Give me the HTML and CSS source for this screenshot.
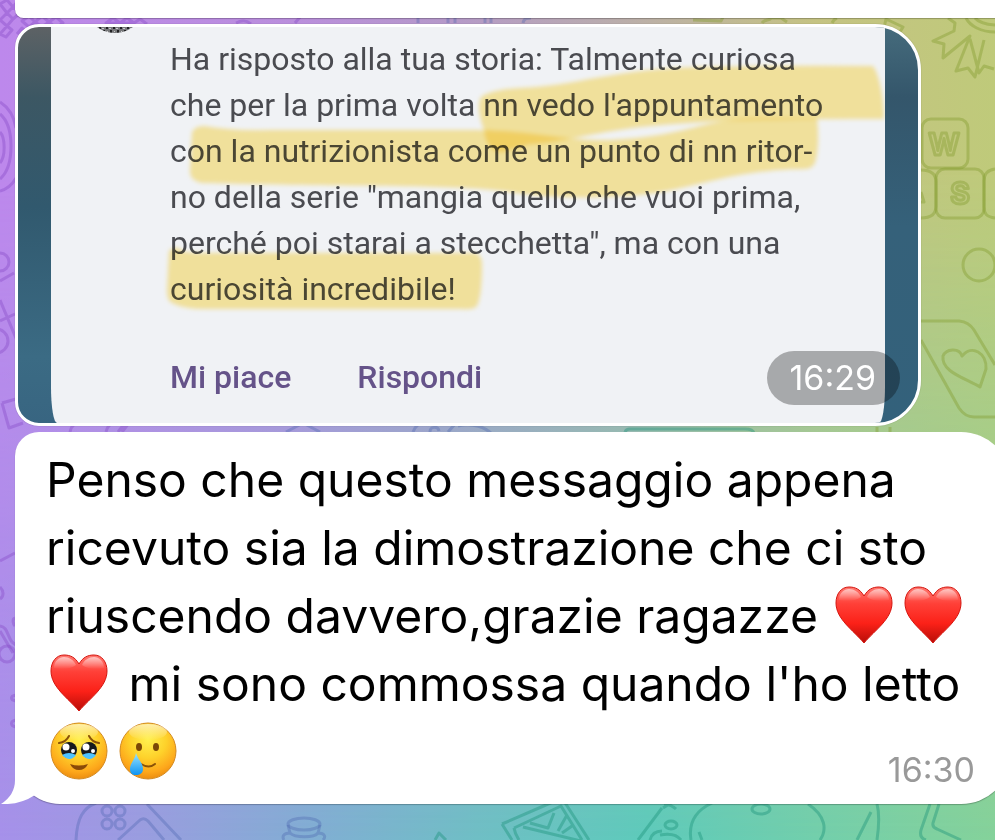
FILE: index.html
```html
<!DOCTYPE html>
<html lang="it">
<head>
    <meta charset="UTF-8">
    <meta name="viewport" content="width=device-width, initial-scale=1.0">
    <title>Chat</title>
    <link rel="stylesheet" href="styles.css">
</head>
<body>
    <div class="wallpaper"></div>
    <svg class="doodles" viewBox="0 0 995 840" preserveAspectRatio="xMidYMid slice" aria-hidden="true">
        <g class="purple">
            <path d="M0 4l7-4 6 7-6 6zM7 13l6-6 7 6-7 6zM0 20l7-7 6 6-6 7zM13 7l5-6 6 5-4 7zM0 34l7-8 5 4-6 7z"/>
            <path d="M22 21l7-5 6 6-6 5zM35 22l7-6 7 6-7 5zM49 22l7-5 7 6-7 5zM106 23l7-5 7 5zM120 23l7-5 7 5zM134 23l6-4 7 5M28 34l-6-6-5 6"/>
            <path d="M0 102c8 5 14 14 16 26M0 114c7 6 11 16 11 32s-4 27-11 33M0 132c5 5 6 24 0 31M0 191c8-2 12-6 16-13"/>
            <circle cx="0" cy="262" r="9"/>
            <path d="M0 281l14-8M0 300l18 43M0 321l15-7"/>
            <circle cx="-4" cy="341" r="12"/>
            <path d="M2 403l14-4M2 403l7 25 14-5M70 432c1-6 4-9 10-9M106 432c2-7 4-8 8-8M118 432l7-9M122 432l7-9"/>
            <path d="M0 561l15-8M0 587c4 4 4 9 0 12M0 626c8 1 7 10 12 16M15 618c-3 1-2 6 0 8M0 631l13 22M12 642l4 3"/>
            <circle cx="7" cy="654" r="8"/>
            <path d="M16 695c-6 1-6 5 0 6M16 720c-6 1-6 6 0 7M236 23c6-3 10-3 15 1M295 23l5-6"/>
        </g>
        <g class="blue">
            <path d="M76 840c1-22 7-32 20-37M147 804l34 36M118 840l22-20q4-3 8 1l16 19"/>
            <circle cx="107" cy="811" r="5"/><circle cx="120" cy="811" r="5"/>
            <circle cx="107" cy="824" r="5"/><circle cx="120" cy="824" r="5"/>
            <ellipse cx="304" cy="824" rx="16" ry="6"/>
            <path d="M288 825l2 8c5 5 24 5 28 0l2-8M290 833c-7 0-8 4-6 7M318 833c7 0 8 4 5 7"/>
            <path d="M286 432l17-9 17 9M413 432c3-8 9-10 15-9M430 432c0-6 8-6 9-1M448 432l8-9M458 426c15-4 28 2 34 8"/>
            <path d="M418 23v-5M448 23v-5M455 23v-5M485 23v-5M491 23v-5M523 23c1-5 4-5 8-5"/>
        </g>
        <g class="teal">
            <path d="M502 824l60-26 27 42M502 824l10 16M514 828l47-22 21 34M514 828q1 6 5 12M523 827l62 15M530 823l18 5 6-15M558 831l9-16M562 833l10-7"/>
            <path d="M435 840l4-7 7 7M638 840l24-32M650 840c2-8 8-9 12-9M664 804q8 1 12 5M663 808l11-7"/>
            <ellipse cx="671" cy="825" rx="6" ry="4"/>
            <path d="M660 835q15-3 21 5M691 840c-3-18 6-30 21-37M808 804c18 12 19 26 12 36M699 832l3 8"/>
            <ellipse cx="761" cy="809" rx="9" ry="5"/>
            <path d="M877 804c3 11 2 22 0 36M871 812l-14 28M930 804l-9 26q-2 8 5 10M939 804l-6 19q-1 4 4 6l24 11"/>
            <path d="M625 432q1-3 5-3h115q8 0 9 4"/>
        </g>
        <g class="green">
            <path d="M693 20l28 1 3-6M762 23c2-4 8-2 9-5l10 0 6 4M832 23q2-4 5-5M886 19l17 8-8 13-12-8z"/>
            <path d="M948 18l7 5-1 8-21 10 11 3-1 14 27-22-14 35 12-3 7 9 9-37M970 39l9 34 5-7 10 3M966 18c4 8 15 14 29 14M975 18q5 6 20 7"/>
            <rect x="922" y="119" width="46" height="49" rx="9"/>
            <rect x="936" y="169" width="48" height="49" rx="9"/>
            <path d="M921 170c10 0 15 4 15 12v24c0 8-5 12-15 12M995 169c-8 1-11 5-11 12v26c0 7 3 10 11 11M921 192l3 10h-3"/>
            <circle cx="979" cy="265" r="16"/>
            <path d="M921 321h38q10 1 15 9l21 35M921 340l38 68q6 9 15 9h21M877 427v5M890 427v5"/>
            <path d="M962 356c-3-9-16-7-19 0-2 16 22 22 37 31l6-18c1-16-14-25-24-13z"/>
            <text x="944" y="155" text-anchor="middle">W</text>
            <text x="960" y="204" text-anchor="middle">S</text>
        </g>
    </svg>

    <main class="chat">
        <div class="bubble previous"></div>

        <article class="photo">
            <div class="sheet">
                <svg class="avatar" viewBox="0 0 60 60" aria-hidden="true">
                    <defs>
                        <pattern id="speckle" width="7" height="6" patternUnits="userSpaceOnUse">
                            <rect width="7" height="6" fill="#77787a"/>
                            <path d="M0 0h2v2H0zM4 3h2v3H4z" fill="#222325"/>
                            <path d="M3 1h2v1H3zM1 4h1v1H1z" fill="#c9cacb"/>
                        </pattern>
                    </defs>
                    <circle cx="30" cy="30" r="30" fill="url(#speckle)"/>
                </svg>
                <p class="story">
                    Ha risposto alla tua storia: Talmente curiosa<br>
                    che per la prima volta nn vedo l'appuntamento<br>
                    con la nutrizionista come un punto di nn ritor-<br>
                    no della serie "mangia quello che vuoi prima,<br>
                    perché poi starai a stecchetta", ma con una<br>
                    curiosità incredibile!
                </p>
                <div class="actions">
                    <button type="button">Mi piace</button>
                    <button type="button">Rispondi</button>
                </div>
                <svg class="marker" viewBox="51 27 834 396" aria-hidden="true">
                    <path d="M481 97Q490 90 520 88C570 87 620 68 700 67Q790 65 873 66C879 74 884 98 884 119Q720 118 640 127C590 133 560 143 530 144L502 152Q487 152 484 130Q476 108 481 97Z"/>
                    <path d="M192 132Q195 126 204 126Q230 131 270 130H470C530 130 560 141 610 140C690 136 700 119 760 118H817Q820 145 815 163Q812 169 804 169C730 170 700 188 640 195Q560 201 510 192C460 184 340 187 210 183Q191 184 190 172Z"/>
                    <path d="M169 251Q176 244 184 252L200 253H476Q482 256 482 264Q482 295 477 306Q473 310 462 309H205Q184 309 172 303Q167 301 167 290Z"/>
                </svg>
            </div>
            <time class="stamp">16:29</time>
        </article>

        <article class="bubble message">
            <p>
                Penso che questo messaggio appena<br>
                ricevuto sia la dimostrazione che ci sto<br>
                riuscendo davvero,grazie ragazze
                <svg class="emoji" viewBox="0 0 58 58" role="img" aria-label="cuore rosso"><use href="#heart"/></svg><svg class="emoji" viewBox="0 0 58 58" role="img" aria-label="cuore rosso"><use href="#heart"/></svg><br>
                <svg class="emoji" viewBox="0 0 58 58" role="img" aria-label="cuore rosso">
                    <defs>
                        <linearGradient id="red" x1="0" y1="0" x2="0" y2="1">
                            <stop offset="0" stop-color="#ff7a72"/>
                            <stop offset=".3" stop-color="#ff4038"/>
                            <stop offset=".65" stop-color="#fb2118"/>
                            <stop offset="1" stop-color="#b80d08"/>
                        </linearGradient>
                        <linearGradient id="shine" x1="0" y1="0" x2="0" y2="1">
                            <stop offset="0" stop-color="#fff" stop-opacity=".6"/>
                            <stop offset="1" stop-color="#fff" stop-opacity="0"/>
                        </linearGradient>
                        <radialGradient id="face" cx=".5" cy=".3" r=".72">
                            <stop offset="0" stop-color="#fff04f"/>
                            <stop offset=".45" stop-color="#fed22b"/>
                            <stop offset=".8" stop-color="#fda71b"/>
                            <stop offset="1" stop-color="#e9890f"/>
                        </radialGradient>
                        <linearGradient id="tear" x1="0" y1="0" x2="0" y2="1">
                            <stop offset="0" stop-color="#9be4ff"/>
                            <stop offset="1" stop-color="#0d94f3"/>
                        </linearGradient>
                    </defs>
                    <g id="heart">
                        <path d="M29 10C25 3 20 1 14 1 6 1 1 8 1 17c0 16 17 27 28 40 11-13 28-24 28-40C57 8 52 1 44 1c-6 0-11 2-15 9z" fill="url(#red)" stroke="#d5160f" stroke-width="1"/>
                        <path d="M4 14C4 7 9 3 14 3s10 3 12 8c-5 4-15 5-22 3zM32 11c2-5 7-8 12-8s10 4 10 11c-7 2-17 1-22-3z" fill="url(#shine)"/>
                    </g>
                </svg> mi sono commossa quando l'ho letto<br>
                <svg class="emoji" viewBox="0 0 58 58" role="img" aria-label="faccina che trattiene le lacrime">
                    <circle cx="29" cy="29" r="28" fill="url(#face)" stroke="#d38b22" stroke-width="1"/>
                    <ellipse cx="29" cy="10" rx="19" ry="8" fill="url(#shine)"/>
                    <path d="M9 21q7-1 10-7M49 21q-7-1-10-7" fill="none" stroke="#8a5208" stroke-width="2" stroke-linecap="round"/>
                    <circle cx="19" cy="28" r="8" fill="#171a1e"/><circle cx="39" cy="28" r="8" fill="#171a1e"/>
                    <path d="M12 33q7-4 14 0-6 8-14 0zM32 33q7-4 14 0-6 8-14 0z" fill="#4ec3ff"/>
                    <circle cx="16" cy="25" r="3.5" fill="#fff"/><circle cx="36" cy="25" r="3.5" fill="#fff"/>
                    <circle cx="23" cy="29" r="2" fill="#fff"/><circle cx="43" cy="29" r="2" fill="#fff"/>
                    <path d="M20 42q9 3 18 0-3 6-9 6t-9-6z" fill="#8a4a08"/>
                </svg><svg class="emoji" viewBox="0 0 58 58" role="img" aria-label="faccina che sorride con una lacrima">
                    <circle cx="29" cy="29" r="28" fill="url(#face)" stroke="#d38b22" stroke-width="1"/>
                    <ellipse cx="29" cy="10" rx="19" ry="8" fill="url(#shine)"/>
                    <ellipse cx="20" cy="25" rx="3" ry="4" fill="#7b4706"/><ellipse cx="37" cy="25" rx="3" ry="4" fill="#7b4706"/>
                    <path d="M22 42q8 5 14 0" fill="none" stroke="#8a5208" stroke-width="2" stroke-linecap="round"/>
                    <path d="M17 31c2 7 7 10 7 16 0 4-3 6-7 6s-6-2-6-6c0-6 5-9 6-16z" fill="url(#tear)"/>
                </svg>
            </p>
            <time class="time">16:30</time>
            <svg class="tail" viewBox="0 0 60 50" aria-hidden="true">
                <path d="M15 0V26Q15 41 1 50Q20 51 35 41L45 20Z"/>
            </svg>
        </article>
    </main>
</body>
</html>
```
FILE: styles.css
```css
* {
    box-sizing: border-box;
}

body {
    position: relative;
    margin: 0;
    min-height: 100vh;
    overflow: hidden;
    font-family: Inter, 'Liberation Sans', sans-serif;
    background: linear-gradient(90deg, #a691ea 0%, #9a9de0 14%, #7fb0d2 33%, #6fbfc5 48%, #5ecbbb 65%, #72cfac 82%, #85d29b 100%);
}

/* upper colours of the wallpaper, fading into the body gradient */
.wallpaper {
    position: absolute;
    inset: 0;
    background: linear-gradient(90deg, #bd88ec 0%, #ba8fdc 30%, #b599c9 45%, #b9abb0 60%, #c5c383 82%, #bfca7a 100%);
    mask-image: linear-gradient(180deg, #000 0%, #000 20%, transparent 100%);
}

.doodles {
    position: absolute;
    inset: 0;
    width: 100%;
    height: 100%;
    fill: none;
    stroke-width: 3;
    stroke-linejoin: round;
}

.purple { stroke: rgba(135, 75, 200, 0.4); }
.blue { stroke: rgba(75, 100, 175, 0.35); }
.teal { stroke: rgba(25, 145, 120, 0.4); }
.green { stroke: rgba(130, 155, 45, 0.4); }

.green text {
    font-size: 30px;
    font-weight: 700;
}

.chat {
    position: relative;
    display: flex;
    flex-direction: column;
    gap: 6px;
    padding-left: 15px;
}

.bubble {
    position: relative;
    margin-right: -16px;
    background: #fff;
    box-shadow: 0 1px 1px rgba(0, 0, 0, 0.25);
}

.previous {
    height: 18px;
    border-radius: 0 0 50px 24px;
}

.photo {
    position: relative;
    margin-right: 74px;
    padding: 0 33px;
    border: 3px solid #fff;
    border-radius: 24px 46px 46px 24px;
    overflow: hidden;
    background:
        linear-gradient(180deg, #5d6265 0, #3c5763 70px, #31596e 180px, #3b6b84 330px, #386581 100%) left / 50% 100% no-repeat,
        linear-gradient(180deg, #456b7c 0, #34566b 70px, #35617a 200px, #33617b 100%) right / 50% 100% no-repeat;
    box-shadow: 0 0 1px rgba(0, 0, 0, 0.4);
}

.sheet {
    position: relative;
    padding: 9px 0 24px 119px;
    border-radius: 0 0 6px 6px / 0 0 36px 36px;
    overflow: hidden;
    background: #f0f2f5;
    font-family: Roboto, sans-serif;
    font-size: 32px;
}

.story {
    margin: 0;
    line-height: 46px;
    color: #4a4b50;
    white-space: nowrap;
}

.actions {
    display: flex;
    gap: 66px;
    margin-top: 43px;
}

.actions button {
    padding: 0;
    border: 0;
    background: none;
    font: inherit;
    font-weight: 500;
    line-height: 44px;
    color: #655389;
}

.avatar {
    position: absolute;
    top: -54px;
    left: 34px;
    width: 60px;
    height: 60px;
}

/* highlighter strokes over the story text */
.marker {
    position: absolute;
    top: 0;
    left: 0;
    width: 834px;
    height: 396px;
    fill: #ffeca1;
    mix-blend-mode: multiply;
    filter: blur(2px);
}

.marker path {
    mix-blend-mode: multiply;
}

.stamp {
    position: absolute;
    right: 18px;
    bottom: 18px;
    padding: 0 24px 0 22px;
    border-radius: 27px;
    background: rgba(0, 0, 0, 0.3);
    color: #fff;
    font-size: 34px;
    line-height: 54px;
}

.message {
    padding: 14px 36px 18px 31px;
    border-radius: 24px 50px 50px 45px;
}

.message p {
    margin: 0;
    font-size: 48px;
    line-height: 68px;
    color: #000;
    white-space: nowrap;
}

.emoji {
    width: 58px;
    height: 58px;
    margin: -8px 7px -8px 4px;
    vertical-align: -3px;
}

.time {
    position: absolute;
    right: 36px;
    bottom: 12px;
    font-size: 34px;
    line-height: 44px;
    color: #999;
}

.tail {
    position: absolute;
    left: -15px;
    bottom: 0;
    width: 60px;
    height: 50px;
    fill: #fff;
}
```
